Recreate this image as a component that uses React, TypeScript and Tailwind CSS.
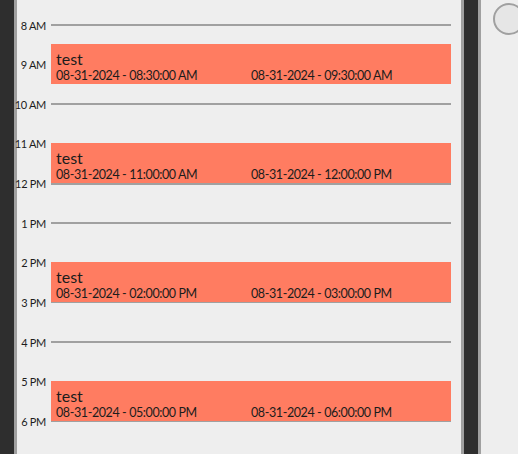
const HOUR = 39.625

const hours = ['8 AM', '9 AM', '10 AM', '11 AM', '12 PM', '1 PM', '2 PM', '3 PM', '4 PM', '5 PM', '6 PM']

const events = [
  { id: 1, title: 'test', start: 8.5, from: '08-31-2024 - 08:30:00 AM', to: '08-31-2024 - 09:30:00 AM' },
  { id: 2, title: 'test', start: 11, from: '08-31-2024 - 11:00:00 AM', to: '08-31-2024 - 12:00:00 PM' },
  { id: 3, title: 'test', start: 14, from: '08-31-2024 - 02:00:00 PM', to: '08-31-2024 - 03:00:00 PM' },
  { id: 4, title: 'test', start: 17, from: '08-31-2024 - 05:00:00 PM', to: '08-31-2024 - 06:00:00 PM' },
]

const App = () => {
  return (
    <div className="flex h-[454px] w-[518px] overflow-hidden bg-[#eeeeee] font-['Lato',sans-serif] text-[#1c1c1c]">
      <div className="w-[14px] shrink-0 bg-[#2e2e2e]" />
      <div className="relative w-[450px] shrink-0 border-x-[3px] border-[#a0a0a0] pt-[5.2px] pr-[10px]">
        {hours.map((h) => (
          <div key={h} className="flex h-[39.625px] items-center">
            <span className="flex w-[34px] shrink-0 justify-end whitespace-nowrap pr-[5px] text-[11px] leading-none tracking-[-0.3px]">
              {h}
            </span>
            <div className="h-[2px] flex-1 bg-[#a0a0a0]" />
          </div>
        ))}
        {events.map((ev) => (
          <div
            key={ev.id}
            className="absolute left-[34px] right-[10px] h-[40px] bg-[#ff7c61] px-[5px] pt-[5px]"
            style={{ top: 24 + (ev.start - 8) * HOUR }}
          >
            <div className="text-[16px] leading-[19px]">{ev.title}</div>
            <div className="flex whitespace-nowrap text-[12.5px] leading-[15px] tracking-[-0.4px]">
              <span className="w-[195px] shrink-0">{ev.from}</span>
              <span>{ev.to}</span>
            </div>
          </div>
        ))}
      </div>
      <div className="w-[14px] shrink-0 bg-[#2e2e2e]" />
      <div className="flex-1 border-l-[3px] border-[#a0a0a0] pl-[12px] pt-[3px]">
        <div className="h-[32px] w-[32px] rounded-full border-2 border-[#a0a0a0] bg-[#e6e6e6]" />
      </div>
    </div>
  )
}

export default App
